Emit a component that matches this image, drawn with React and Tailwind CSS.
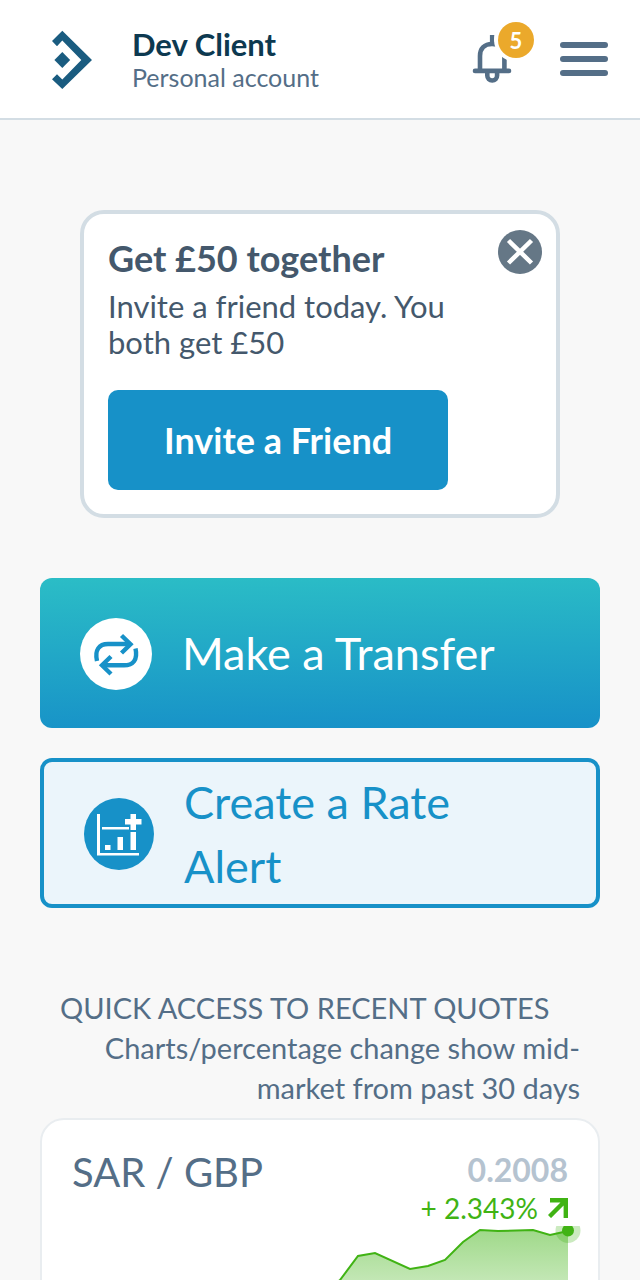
const Logo = () => (
  <svg viewBox="0 0 40 60" className="h-15 w-10" fill="#1a5c80" aria-hidden="true">
    <path d="M10.3 1.7 40 31 10.3 60 0 50.2l5-5 5.3 5.3 19-19.5-19-19.5L5 17.2 0 11.9z" />
    <path d="M10.3 23 18.2 31 10.3 39 2.4 31z" />
  </svg>
);

const BellIcon = () => (
  <svg viewBox="0 0 40 50" className="h-12.5 w-10" fill="none" stroke="#546e87" aria-hidden="true">
    <path strokeWidth="4.6" d="M8 37V22c0-7.5 4.5-12 12-12s12.4 4.5 12.4 12v15" />
    <path strokeWidth="4.6" d="M20.2 1v9" />
    <path strokeWidth="4.6" strokeLinecap="round" d="M3 36.9h34" />
    <path strokeWidth="4.6" d="M15.3 37v4.5a4.9 5 0 0 0 9.8 0V37" />
    <circle cx="44" cy="6" r="22" fill="#fff" stroke="none" />
  </svg>
);

const TransferIcon = () => (
  <svg viewBox="0 0 72 72" className="size-full" fill="none" stroke="#1791c8" strokeWidth="4.4" aria-hidden="true">
    <path d="M17 43C14.5 32 19 26 28 26h22" />
    <path d="M41.5 17.5 50.5 26.2 41.5 35" />
    <path d="M55.5 30.5C58 42 53 47.3 44 47.3H22" />
    <path d="M31 38.5 22 47.3 31 56" />
  </svg>
);

const AlertIcon = () => (
  <svg viewBox="0 0 70 72" className="h-18 w-17.5" fill="#fff" aria-hidden="true">
    <ellipse cx="35" cy="36" rx="35" ry="36" fill="#1791c8" />
    <path d="M13 16h3v39h39v2.5H13z" />
    <path d="M18 29h27v2.5H18z" />
    <path d="M21 47h5.5v5H21zM33.5 39H39v13h-5.5zM46.5 34H52v18h-5.5z" />
    <path d="M46.5 16H52v5h5.5v5.5H52V32h-5.5v-5.5H41V21h5.5z" />
  </svg>
);

const points = [
  [0, 104], [18, 98], [35, 106], [53, 92], [71, 96], [88, 84], [106, 88], [124, 78],
  [142, 86], [159, 90], [177, 82], [195, 76], [213, 80], [230, 72], [248, 68], [268, 54],
  [286, 30], [303, 27], [338, 43], [356, 40], [373, 34], [391, 16], [408, 4],
  [426, 5], [461, 4], [478, 9], [496, 5],
];

const QuoteChart = () => {
  const line = points.map((p) => p.join(',')).join(' ');

  return (
    <svg viewBox="0 0 512 140" className="block w-full" aria-hidden="true">
      <defs>
        <linearGradient id="area" x1="0" y1="0" x2="0" y2="1">
          <stop offset="0" stopColor="#40b314" stopOpacity="0.5" />
          <stop offset="1" stopColor="#40b314" stopOpacity="0" />
        </linearGradient>
      </defs>
      <polygon points={`0,140 ${line} 496,140`} fill="url(#area)" />
      <polyline points={line} fill="none" stroke="#40b314" strokeWidth="2" />
      <circle cx="496" cy="4.5" r="12.5" fill="#40b314" fillOpacity="0.27" />
      <circle cx="496" cy="4.5" r="6" fill="#40b314" />
    </svg>
  );
};

const Header = () => (
  <header className="flex items-center border-b-2 border-[#d3dde4] bg-white px-8 py-6.5">
    <a href="#home" aria-label="Home" className="ml-5">
      <Logo />
    </a>
    <div className="ml-10 flex-1">
      <div className="text-[31px] leading-9 font-bold text-[#0d3950]">Dev Client</div>
      <div className="text-[25px] leading-7.5 text-[#546e87]">Personal account</div>
    </div>
    <button type="button" aria-label="Notifications" className="relative mr-12">
      <BellIcon />
      <span className="absolute -top-3 -right-5.5 flex size-9 items-center justify-center rounded-full bg-[#eba92b] text-[22px] font-bold text-white">
        5
      </span>
    </button>
    <button type="button" aria-label="Menu" className="flex w-12 flex-col gap-2">
      <span className="h-1.5 w-full rounded-full bg-[#546e87]" />
      <span className="h-1.5 w-full rounded-full bg-[#546e87]" />
      <span className="h-1.5 w-full rounded-full bg-[#546e87]" />
    </button>
  </header>
);

const InviteCard = () => (
  <section className="relative mx-10 rounded-3xl border-4 border-[#d3dde4] bg-white p-6 text-[#44586c]">
    <h2 className="mb-2.5 text-4xl leading-10 font-bold">Get £50 together</h2>
    <p className="mr-12 text-[31px] leading-9">Invite a friend today. You both get £50</p>
    <button
      type="button"
      className="mt-7.5 h-25 rounded-[10px] bg-[#1791c8] px-14 text-4xl font-bold text-white"
    >
      Invite a Friend
    </button>
    <button
      type="button"
      aria-label="Close"
      className="absolute top-4 right-3.5 size-11 rounded-full bg-[#657786]"
    >
      <svg viewBox="0 0 44 44" className="size-full" stroke="#fff" strokeWidth="4.5" aria-hidden="true">
        <path d="M10.5 10.5 33.5 33M33.5 10.5 10.5 33" />
      </svg>
    </button>
  </section>
);

const QuoteCard = () => (
  <article className="rounded-3xl border-2 border-[#e9edf0] bg-white pt-7 pb-8">
    <div className="flex justify-between px-7.5">
      <h3 className="text-[40px] leading-12 text-[#546e87]">SAR / GBP</h3>
      <div className="text-right">
        <div className="text-[32px] leading-11 font-bold text-[#b5c3d0]">0.2008</div>
        <div className="mb-0.5 flex items-center justify-end gap-2.5 text-[28px] leading-8 text-[#40b314]">
          + 2.343%
          <svg viewBox="0 0 20 20" className="size-5" fill="none" stroke="currentColor" strokeWidth="4.4" aria-hidden="true">
            <path d="M2 2.2h15.8V20M18 2 1.5 18.5" />
          </svg>
        </div>
      </div>
    </div>
    <div className="pr-3.5 pl-7.5">
      <QuoteChart />
    </div>
  </article>
);

export default function App() {
  return (
    <div className="min-h-screen bg-[#f8f8f8] font-['Lato',sans-serif]">
      <Header />
      <main className="px-10 pt-22.5">
        <InviteCard />

        <button
          type="button"
          className="mt-15 flex h-37.5 w-full items-center gap-7.5 rounded-xl bg-linear-[179deg] from-[#2bbdc6] to-[#1791c8] px-10 pt-0.5 text-left text-[45px] text-white"
        >
          <span className="size-18 shrink-0 rounded-full bg-white">
            <TransferIcon />
          </span>
          Make a Transfer
        </button>
        <button
          type="button"
          className="mt-7.5 flex h-37.5 w-full items-center gap-7.5 rounded-xl border-4 border-[#1791c8] bg-[#ebf5fb] px-10 pt-0.5 text-left text-[45px] leading-16 text-[#1791c8]"
        >
          <span className="shrink-0">
            <AlertIcon />
          </span>
          <span className="mr-10">Create a Rate Alert</span>
        </button>

        <div className="mt-20 px-5 text-[29px] leading-10 text-[#546e87]">
          <h2>QUICK ACCESS TO RECENT QUOTES</h2>
          <p className="text-right">Charts/percentage change show mid-market from past 30 days</p>
        </div>
        <div className="mt-2.5">
          <QuoteCard />
        </div>
      </main>
    </div>
  );
}
